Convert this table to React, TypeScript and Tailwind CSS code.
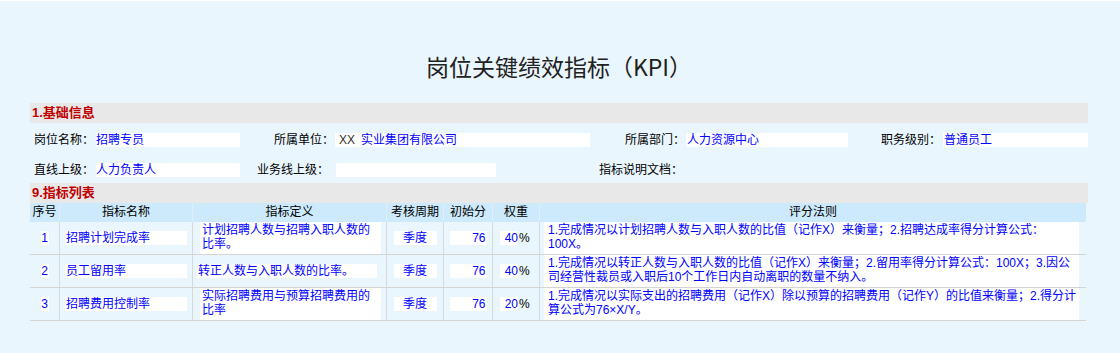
import React from 'react';

type Row = {
  no: string;
  name: string;
  def: string[];
  period: string;
  score: string;
  weight: string;
  rule: string[];
};

const rows: Row[] = [
  {
    no: '1',
    name: '招聘计划完成率',
    def: ['计划招聘人数与招聘入职人数的', '比率。'],
    period: '季度',
    score: '76',
    weight: '40',
    rule: ['1.完成情况以计划招聘人数与入职人数的比值（记作X）来衡量；2.招聘达成率得分计算公式：', '100X。'],
  },
  {
    no: '2',
    name: '员工留用率',
    def: ['转正人数与入职人数的比率。'],
    period: '季度',
    score: '76',
    weight: '40',
    rule: ['1.完成情况以转正人数与入职人数的比值（记作X）来衡量；2.留用率得分计算公式：100X；3.因公', '司经营性裁员或入职后10个工作日内自动离职的数量不纳入。'],
  },
  {
    no: '3',
    name: '招聘费用控制率',
    def: ['实际招聘费用与预算招聘费用的', '比率'],
    period: '季度',
    score: '76',
    weight: '20',
    rule: ['1.完成情况以实际支出的招聘费用（记作X）除以预算的招聘费用（记作Y）的比值来衡量；2.得分计', '算公式为76×X/Y。'],
  },
];

const cols = 'grid grid-cols-[30px_133px_194px_57px_49px_47px_546px]';

const Label: React.FC<{ text: string; className?: string }> = ({ text, className = '' }) => (
  <div className={`text-right text-black leading-[14px] whitespace-nowrap ${className}`}>{text}</div>
);

const Field: React.FC<{ children?: React.ReactNode; className?: string }> = ({ children, className = '' }) => (
  <div className={`h-[14px] bg-white leading-[14px] text-[#0000ff] whitespace-nowrap ${className}`}>{children}</div>
);

const SectionTitle: React.FC<{ text: string }> = ({ text }) => (
  <div className="h-[20px] bg-[#e8e8e8] pl-[2px] text-[13px] font-bold leading-[20px] text-[#c00000]">{text}</div>
);

const App: React.FC = () => {
  return (
    <div className="min-h-[353px] border-t border-white bg-[#eaf6fd] font-['Liberation_Sans','Noto_Sans_CJK_SC',sans-serif] text-[12px]">
      <div className="ml-[30px] w-[1058px]">
        <h1 className="h-[102px] pt-[50px] text-center font-['Noto_Sans_CJK_SC',sans-serif] text-[23px] font-normal leading-[30px] text-[#222]">
          岗位关键绩效指标（KPI）
        </h1>

        <SectionTitle text="1.基础信息" />

        {/* 基础信息 */}
        <div className="grid grid-cols-[66px_144px_95px_255px_96px_162px_95px_145px] gap-y-[16px] pt-[10px] pb-[6px]">
          <Label text="岗位名称：" className="pr-[2px]" />
          <Field>招聘专员</Field>
          <Label text="所属单位：" className="pr-[1px]" />
          <Field className="pl-[4px]">
            <span className="mr-[6px] text-[#333]">XX</span>实业集团有限公司
          </Field>
          <Label text="所属部门：" className="pr-[1px]" />
          <Field className="pl-[1px]">人力资源中心</Field>
          <Label text="职务级别：" className="pr-[2px]" />
          <Field className="pl-[1px]">普通员工</Field>

          <Label text="直线上级：" className="pr-[2px]" />
          <Field>人力负责人</Field>
          <Label text="业务线上级：" className="pr-[6px]" />
          <Field className="ml-[1px] w-[160px]" />
          <Label text="指标说明文档：" className="pr-[3px]" />
          <div />
          <div />
          <div />
        </div>

        <SectionTitle text="9.指标列表" />

        {/* 指标列表 */}
        <div className="w-[1056px]">
          <div className={`${cols} h-[19px] bg-[#cceafb] text-center leading-[19px] text-black`}>
            {['序号', '指标名称', '指标定义', '考核周期', '初始分', '权重', '评分法则'].map((h, i) => (
              <div key={h} className={i < 6 ? 'border-r border-[#e2eef5]' : ''}>{h}</div>
            ))}
          </div>

          {rows.map((r) => (
            <div key={r.no} className={`${cols} h-[33px] border-b border-[#d4d4d4] text-[#0000ff]`}>
              <div className="flex items-center justify-center border-r border-[#d8d8d8]">
                <span className="h-[14px] w-[8px] bg-white text-center leading-[14px]">{r.no}</span>
              </div>
              <div className="flex items-center border-r border-[#d8d8d8] pl-[5px]">
                <Field className="w-[122px] pl-[1px]">{r.name}</Field>
              </div>
              <div className="flex items-center border-r border-[#d8d8d8]">
                {r.def.length > 1 ? (
                  <div className="ml-[7px] h-full w-[181px] bg-white pt-[1px] pl-[2px] leading-[14px]">
                    {r.def.map((l) => (
                      <div key={l} className="whitespace-nowrap">{l}</div>
                    ))}
                  </div>
                ) : (
                  <Field className="ml-[4px] w-[180px] pl-[1px]">{r.def[0]}</Field>
                )}
              </div>
              <div className="flex items-center justify-center border-r border-[#d8d8d8]">
                <Field className="w-[43px] text-center">{r.period}</Field>
              </div>
              <div className="flex items-center justify-center border-r border-[#d8d8d8]">
                <Field className="w-[37px] pr-[1px] text-right">{r.score}</Field>
              </div>
              <div className="flex items-center border-r border-[#d8d8d8] pl-[7px]">
                <Field className="w-[18px] text-right">{r.weight}</Field>
                <span className="ml-[1px] leading-[14px] text-black">%</span>
              </div>
              <div className="flex items-center">
                <div className="ml-[4px] h-full w-[535px] bg-white pt-[1px] pl-[4px] leading-[14px]">
                  {r.rule.map((l) => (
                    <div key={l} className="whitespace-nowrap">{l}</div>
                  ))}
                </div>
              </div>
            </div>
          ))}
        </div>
      </div>
    </div>
  );
};

export default App;
